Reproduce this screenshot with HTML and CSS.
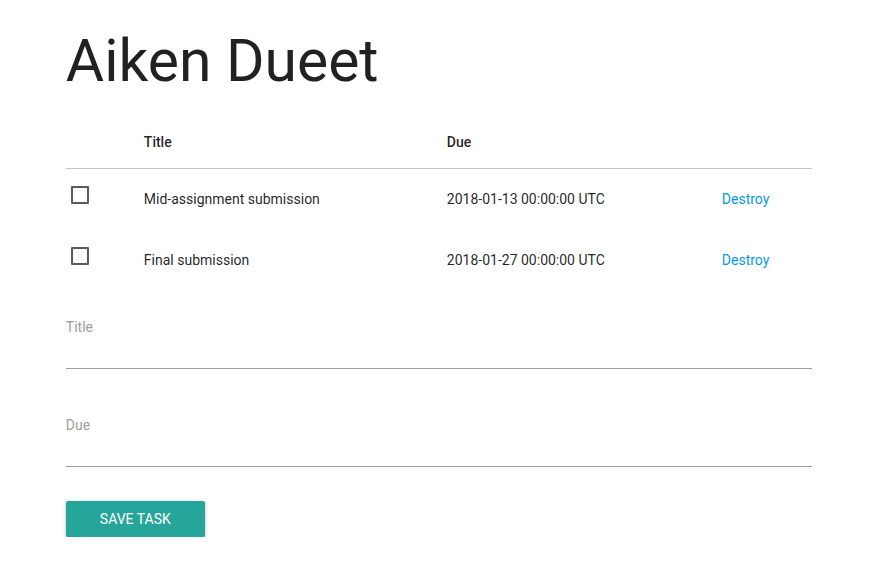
FILE: index.html
```html
<!DOCTYPE html>
<html lang="en">
<head>
<meta charset="utf-8">
<title>Aiken Dueet</title>
<link rel="stylesheet" href="styles.css">
</head>
<body>
<div class="container">
  <h1 class="page-title">Aiken Dueet</h1>
  <table class="tasks">
    <thead>
      <tr>
        <th class="col-check"></th>
        <th class="col-title">Title</th>
        <th class="col-due">Due</th>
        <th class="col-action"></th>
      </tr>
    </thead>
    <tbody>
      <tr>
        <td><span class="checkbox"></span></td>
        <td>Mid-assignment submission</td>
        <td>2018-01-13 00:00:00 UTC</td>
        <td><a class="link" href="#">Destroy</a></td>
      </tr>
      <tr>
        <td><span class="checkbox"></span></td>
        <td>Final submission</td>
        <td>2018-01-27 00:00:00 UTC</td>
        <td><a class="link" href="#">Destroy</a></td>
      </tr>
    </tbody>
  </table>
  <form class="task-form">
    <div class="field">
      <label class="field-label" for="title">Title</label>
      <input class="field-input" id="title" type="text">
    </div>
    <div class="field">
      <label class="field-label" for="due">Due</label>
      <input class="field-input" id="due" type="text">
    </div>
    <div class="actions">
      <button class="btn" type="button">Save task</button>
    </div>
  </form>
</div>
</body>
</html>
```

FILE: styles.css
```css
html, body {
  margin: 0;
  padding: 0;
  background: #fff;
}
body {
  font-family: Roboto, "Liberation Sans", sans-serif;
  font-size: 14px;
  line-height: 1.5;
  color: rgba(0, 0, 0, 0.87);
}
.container {
  width: 85%;
  margin: 0 auto;
}
.page-title {
  font-size: 58.8px;
  font-weight: 400;
  line-height: 65px;
  margin: 28px 0 24px;
}
.tasks {
  width: 100%;
  border-collapse: collapse;
  table-layout: fixed;
}
.tasks thead {
  border-bottom: 1px solid rgba(0, 0, 0, 0.12);
}
.tasks th {
  text-align: left;
  font-weight: 500;
  padding: 15px 5px;
  line-height: 21px;
  height: 21px;
}
.col-check { width: 63px; }
.col-title { width: 293px; }
.col-due { width: 265px; }
.tasks td {
  padding: 0 5px;
  height: 61px;
  vertical-align: middle;
  line-height: 21px;
}
.checkbox {
  display: block;
  width: 14px;
  height: 14px;
  border: 2px solid #5a5a5a;
  border-radius: 1px;
  margin-bottom: 9px;
}
.link {
  color: #039be5;
  text-decoration: none;
}
.task-form {
  display: flex;
  flex-direction: column;
}
.field {
  display: flex;
  flex-direction: column;
  border-bottom: 1px solid #9e9e9e;
  margin-top: 26px;
}
.field + .field {
  margin-top: 46px;
}
.field-label {
  color: #9e9e9e;
  font-size: 14px;
  line-height: 21px;
}
.field-input {
  height: 30px;
  border: none;
  outline: none;
  padding: 0;
  margin: 0;
  background: transparent;
  font: inherit;
}
.actions {
  margin-top: 34px;
}
.btn {
  width: 139px;
  height: 36px;
  border: none;
  border-radius: 2px;
  background: #26a69a;
  color: #fff;
  font-family: Roboto, "Liberation Sans", sans-serif;
  font-size: 14px;
  text-transform: uppercase;
  padding: 0;
  box-shadow: 0 2px 2px 0 rgba(0, 0, 0, 0.14), 0 3px 1px -2px rgba(0, 0, 0, 0.12), 0 1px 5px 0 rgba(0, 0, 0, 0.2);
}
```
